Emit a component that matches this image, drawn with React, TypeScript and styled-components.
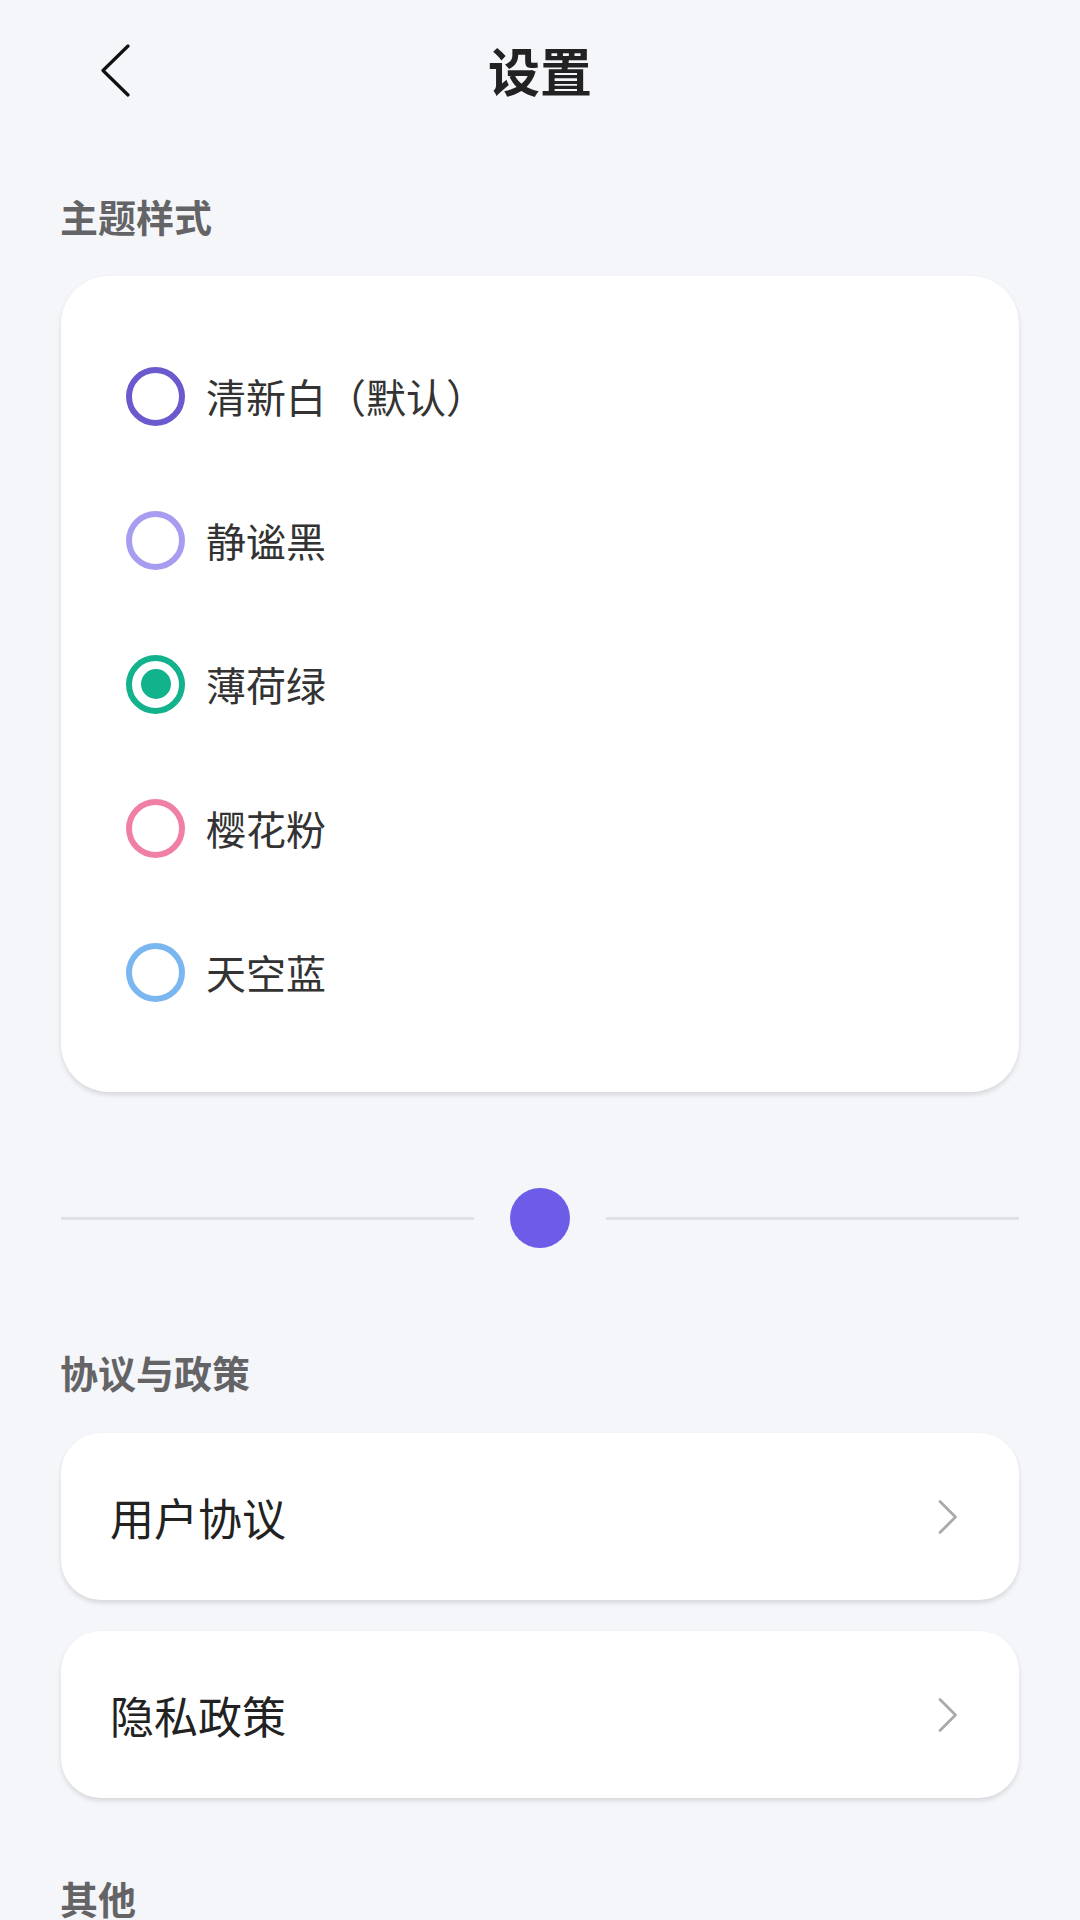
import React from "react";
import styled, { createGlobalStyle } from "styled-components";

const GlobalStyle = createGlobalStyle`
  html, body {
    margin: 0;
    padding: 0;
    background: #f5f6fa;
    font-family: "Noto Sans CJK SC", "Noto Sans", sans-serif;
  }
`;

const Page = styled.div`
  width: 1080px;
  min-height: 1920px;
  box-sizing: border-box;
  padding: 0 61px;
  background: #f5f6fa;
  overflow: hidden;
`;

const Header = styled.div`
  position: relative;
  height: 140px;
  display: flex;
  align-items: center;
  justify-content: center;
`;

const BackButton = styled.button`
  position: absolute;
  left: 35px;
  top: 43px;
  width: 40px;
  height: 56px;
  padding: 0;
  border: none;
  background: none;
  display: flex;
  align-items: center;
  justify-content: center;
`;

const Title = styled.h1`
  margin: 0;
  font-size: 52px;
  line-height: 52px;
  font-weight: 700;
  color: #222;
`;

const SectionTitle = styled.h2<{ $top: number }>`
  margin: ${(p) => p.$top}px 0 0 -1px;
  font-size: 38px;
  line-height: 38px;
  font-weight: 700;
  color: #646466;
`;

const Card = styled.div`
  background: #fff;
  border-radius: 48px;
  box-shadow: 0 3px 5px rgba(0, 0, 0, 0.12);
`;

const ThemeCard = styled(Card)`
  margin-top: 41px;
  padding: 48px 0 48px 65px;
`;

const OptionRow = styled.div`
  height: 144px;
  display: flex;
  align-items: center;
  gap: 21px;
`;

const Radio = styled.span<{ $color: string; $checked?: boolean }>`
  width: 59px;
  height: 59px;
  box-sizing: border-box;
  border-radius: 50%;
  border: 6px solid ${(p) => p.$color};
  display: flex;
  align-items: center;
  justify-content: center;

  &::after {
    content: "";
    display: ${(p) => (p.$checked ? "block" : "none")};
    width: 30px;
    height: 30px;
    border-radius: 50%;
    background: ${(p) => p.$color};
  }
`;

const OptionLabel = styled.span`
  font-size: 40px;
  line-height: 40px;
  color: #333;
`;

const Divider = styled.div`
  margin-top: 96px;
  height: 60px;
  display: flex;
  align-items: center;
  gap: 36px;
`;

const DividerLine = styled.div`
  flex: 1;
  height: 3px;
  background: #e0e0e6;
`;

const DividerDot = styled.div`
  width: 60px;
  height: 60px;
  border-radius: 50%;
  background: #6c5ce7;
`;

const LinkList = styled.div`
  margin-top: 42px;
  display: flex;
  flex-direction: column;
  gap: 31px;
`;

const LinkCard = styled(Card)`
  height: 167px;
  border-radius: 40px;
  box-sizing: border-box;
  padding: 0 61px 0 49px;
  display: flex;
  align-items: center;
  justify-content: space-between;
`;

const LinkLabel = styled.span`
  font-size: 44px;
  line-height: 44px;
  color: #222;
`;

const themes = [
  { label: "清新白（默认）", color: "#6a5acd" },
  { label: "静谧黑", color: "#a69cf0" },
  { label: "薄荷绿", color: "#12b28c", checked: true },
  { label: "樱花粉", color: "#f07fa5" },
  { label: "天空蓝", color: "#7ab6f0" },
];

const links = ["用户协议", "隐私政策"];

const ChevronLeft = () => (
  <svg width="30" height="54" viewBox="0 0 30 54">
    <polyline
      points="27,2 2,26.5 27,51"
      fill="none"
      stroke="#111"
      strokeWidth="3.2"
      strokeLinecap="round"
      strokeLinejoin="round"
    />
  </svg>
);

const ChevronRight = () => (
  <svg width="20" height="34" viewBox="0 0 20 34">
    <polyline
      points="2,1.5 17.5,17 2,32.5"
      fill="none"
      stroke="#aaa"
      strokeWidth="2.8"
      strokeLinecap="round"
      strokeLinejoin="round"
    />
  </svg>
);

export default function App() {
  return (
    <>
      <GlobalStyle />
      <Page>
        <Header>
          <BackButton aria-label="返回">
            <ChevronLeft />
          </BackButton>
          <Title>设置</Title>
        </Header>

        <SectionTitle $top={57}>主题样式</SectionTitle>
        <ThemeCard>
          {themes.map((t) => (
            <OptionRow key={t.label}>
              <Radio $color={t.color} $checked={t.checked} />
              <OptionLabel>{t.label}</OptionLabel>
            </OptionRow>
          ))}
        </ThemeCard>

        <Divider>
          <DividerLine />
          <DividerDot />
          <DividerLine />
        </Divider>

        <SectionTitle $top={105}>协议与政策</SectionTitle>
        <LinkList>
          {links.map((l) => (
            <LinkCard key={l}>
              <LinkLabel>{l}</LinkLabel>
              <ChevronRight />
            </LinkCard>
          ))}
        </LinkList>

        <SectionTitle $top={81}>其他</SectionTitle>
      </Page>
    </>
  );
}
